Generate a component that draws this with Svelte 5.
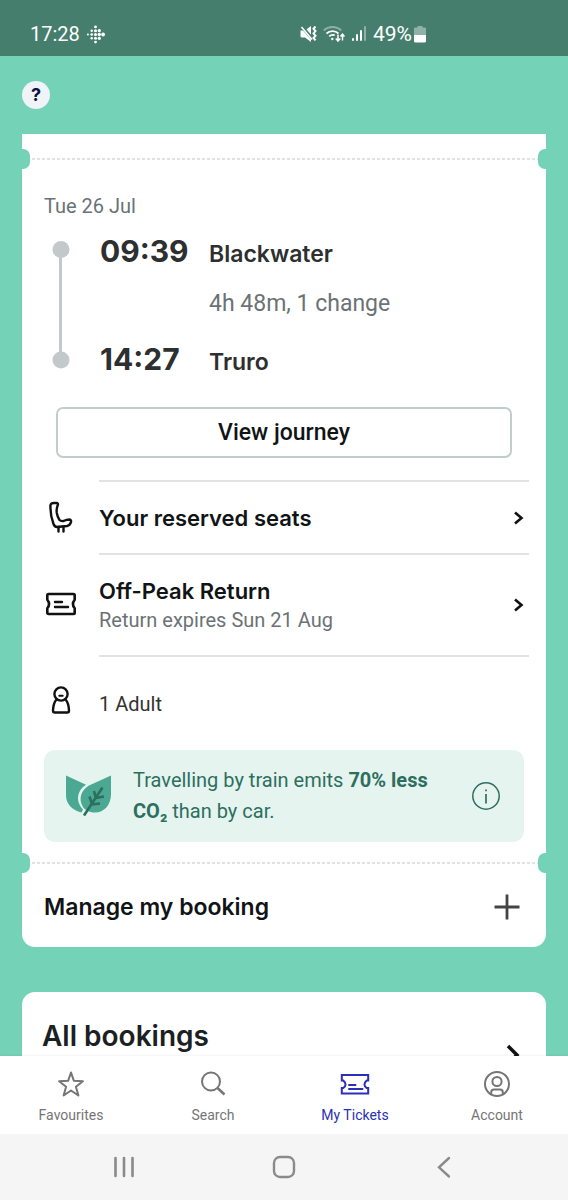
<script lang="ts">
  type Tab = { id: string; label: string };

  const legs = [
    { time: '09:39', station: 'Blackwater' },
    { time: '14:27', station: 'Truro' }
  ];

  const tabs: Tab[] = [
    { id: 'favourites', label: 'Favourites' },
    { id: 'search', label: 'Search' },
    { id: 'tickets', label: 'My Tickets' },
    { id: 'account', label: 'Account' }
  ];

  // dot pattern of the tracker icon: [x, y, radius]
  const trackerDots = [
    [10, 2, 1.5],
    [6, 6, 1.3], [10, 6, 1.6], [14, 6, 1.7],
    [2, 10, 1.1], [6, 10, 1.4], [10, 10, 1.6], [14, 10, 1.8], [18, 10, 2],
    [6, 14, 1.3], [10, 14, 1.6], [14, 14, 1.7],
    [10, 18, 1.5]
  ];

  let activeTab = 'tickets';
</script>

<div class="screen">
  <header class="status-bar">
    <div class="status-left">
      <span>17:28</span>
      <svg width="19" height="19" viewBox="0 0 20 20" fill="#fff" aria-hidden="true">
        {#each trackerDots as [x, y, r]}
          <circle cx={x} cy={y} {r} />
        {/each}
      </svg>
    </div>
    <div class="status-right">
      <svg width="17" height="18" viewBox="0 0 17 18" aria-hidden="true">
        <path d="M.5 5.500H5L11 1v16l-6-4.500H2a1.500 1.500 0 0 1-1.500-1.500z" fill="#fff" />
        <path d="M1 .5l12 14" stroke="#457e6d" stroke-width="3.400" />
        <path d="M1.500 2l10.500 12.500" stroke="#fff" stroke-width="1.600" />
        <path d="M15.500 1.500l-2 2.300 2 2.300-2 2.300 2 2.300-2 2.300 2 2.300" fill="none" stroke="#fff" stroke-width="2" />
      </svg>
      <svg width="22" height="18" viewBox="0 0 22 18" fill="none" stroke="#fff" stroke-width="1.800" aria-hidden="true">
        <path d="M.8 5.500a12.500 12.500 0 0 1 17.400 0" opacity=".4" />
        <path d="M3.500 8.500a8.800 8.800 0 0 1 12 0M6.300 11.300a5 5 0 0 1 5.500-1" />
        <circle cx="9.300" cy="14" r="1.200" fill="#fff" stroke="none" />
        <path d="M15 9.500v6M12.800 13.500L15 16l2.200-2.500M19.500 15.500v-6M17.500 11.500l2-2.300 2 2.300" stroke-width="1.500" />
      </svg>
      <svg width="16" height="18" viewBox="0 0 16 18" fill="#fff" aria-hidden="true">
        <rect x="1" y="13" width="2" height="3" rx="1" />
        <rect x="5" y="9" width="2" height="7" rx="1" />
        <rect x="9" y="5" width="2" height="11" rx="1" />
        <rect x="13" y="1" width="2" height="15" rx="1" opacity=".4" />
      </svg>
      <span class="battery">49%
        <svg width="12" height="18" viewBox="0 0 12 18" aria-hidden="true">
          <path d="M3.500 1h5v1.500H11a1 1 0 0 1 1 1V10H0V3.500a1 1 0 0 1 1-1h2.500z" fill="#fff" opacity=".4" />
          <path d="M0 10h12v6a1.500 1.500 0 0 1-1.500 1.500h-9A1.500 1.500 0 0 1 0 16z" fill="#fff" />
        </svg>
      </span>
    </div>
  </header>

  <main class="content">
    <button class="help" type="button" aria-label="Help">?</button>

    <article class="ticket">
      <div class="perforation"></div>

      <p class="date">Tue 26 Jul</p>

      <div class="trip">
        <svg width="34" height="138" viewBox="0 0 34 138" fill="#c3c9ca" aria-hidden="true">
          <rect x="15" y="18" width="3" height="111" />
          <circle cx="17" cy="18.500" r="8.500" />
          <circle cx="17" cy="129" r="8.500" />
        </svg>
        <div class="stops">
          <div class="stop">
            <time>{legs[0].time}</time>
            <span class="station">{legs[0].station}</span>
          </div>
          <div class="stop via">
            <span class="duration">4h 48m, 1 change</span>
          </div>
          <div class="stop">
            <time>{legs[1].time}</time>
            <span class="station">{legs[1].station}</span>
          </div>
        </div>
      </div>

      <button class="view-journey" type="button">View journey</button>

      <a class="row" href="#seats">
        <svg width="34" height="34" viewBox="0 0 34 34" fill="none" stroke="#111" stroke-width="2.400" stroke-linejoin="round" stroke-linecap="round" aria-hidden="true">
          <path d="M6.500 5Q7 3 10 3h2.500q2 .2 1.300 2-1.600 4-1 8 .7 4 2.700 7 1.500 1.500 4 1 3-1.500 6-1.500 2 .3 1.500 2.500-.8 3.200-4 4L13 27q-2.500-.2-3.500-3Q6 15 6.500 5z" />
          <path d="M14.500 27v4.500M19.500 27v4.500" />
        </svg>
        <span class="row-body seats">
          <strong>Your reserved seats</strong>
          <svg width="11" height="14" viewBox="0 0 11 14" aria-hidden="true">
            <path d="M2 1.500L8.500 7 2 12.500" fill="none" stroke="#111" stroke-width="2.600" />
          </svg>
        </span>
      </a>

      <a class="row" href="#ticket">
        <svg width="34" height="34" viewBox="0 0 34 34" fill="none" stroke="#111" stroke-width="2.600" stroke-linejoin="round" stroke-linecap="round" aria-hidden="true">
          <path d="M4.500 7h25q1.200 0 1.200 1.200v4.500q-3.500 4.300 0 8.600v4.500q0 1.200-1.200 1.200h-25q-1.200 0-1.200-1.200v-4.500q3.500-4.300 0-8.600V8.200Q3.300 7 4.500 7z" />
          <path d="M11 15h7M11 20h13" stroke-width="2.400" />
        </svg>
        <span class="row-body fare">
          <span class="fare-text">
            <strong>Off-Peak Return</strong>
            <small>Return expires Sun 21 Aug</small>
          </span>
          <svg width="11" height="14" viewBox="0 0 11 14" aria-hidden="true">
            <path d="M2 1.500L8.500 7 2 12.500" fill="none" stroke="#111" stroke-width="2.600" />
          </svg>
        </span>
      </a>

      <div class="row">
        <svg width="34" height="34" viewBox="0 0 34 34" fill="none" stroke="#111" stroke-width="2.400" stroke-linejoin="round" stroke-linecap="round" aria-hidden="true">
          <circle cx="17" cy="8" r="6.600" />
          <path d="M12.500 13.500Q9.300 17 9 24.500q0 2 1.800 2h12.400q1.800 0 1.800-2Q24.700 17 21.500 13.500" />
          <path d="M15.300 9.800h3.400" stroke-width="2" />
        </svg>
        <span class="row-body passengers">1 Adult</span>
      </div>

      <aside class="eco">
        <svg width="46" height="44" viewBox="0 0 46 44" aria-hidden="true">
          <path d="M0 1.500l20 9.200C13 15 10 23 13.500 30.500q1 2.500 3.500 5l-1.500 3C6 36 0 30 0 21z" fill="#4ba892" />
          <path d="M45 1.500V20c0 11-7 18.500-16 18.500-5 0-9-1.500-12-5.500C12 25 15 16 23 11.500z" fill="#4ba892" />
          <path d="M18 41.500L36.500 13.500M23.500 22.500l2.500 7.500M28 17l2 7.500M38 22.500l-8 1.500M34 29.500l-8.500 1" fill="none" stroke="#2d6f5f" stroke-width="2.600" />
        </svg>
        <p>Travelling by train emits <b>70% less</b> <b>CO₂</b> than by car.</p>
        <button class="info" type="button" aria-label="More information">
          <svg width="30" height="30" viewBox="0 0 30 30" aria-hidden="true">
            <circle cx="15" cy="15" r="13.200" fill="none" stroke="#2d6f5f" stroke-width="1.500" />
            <path d="M15 13v9.500M15 8.500v1.800" stroke="#2d6f5f" stroke-width="1.700" />
          </svg>
        </button>
      </aside>

      <div class="perforation"></div>

      <button class="manage" type="button">
        Manage my booking
        <svg width="26" height="26" viewBox="0 0 26 26" aria-hidden="true">
          <path d="M13 .5v25M.5 13h25" stroke="#444" stroke-width="2.800" />
        </svg>
      </button>
    </article>

    <a class="all-bookings" href="#bookings">
      <span>All bookings</span>
      <svg width="14" height="22" viewBox="0 0 14 22" aria-hidden="true">
        <path d="M2 2l9 9-9 9" fill="none" stroke="#111" stroke-width="3.500" />
      </svg>
    </a>
  </main>

  <nav class="tabs">
    {#each tabs as tab}
      <button class="tab" class:active={activeTab === tab.id} type="button" on:click={() => (activeTab = tab.id)}>
        <svg width="30" height="30" viewBox="0 0 30 30" fill="none" stroke="currentColor" stroke-width="2" aria-hidden="true">
          {#if tab.id === 'favourites'}
            <path d="M15 3.500l2.900 8.300 9 .4-7 5.500 2.500 8.800L15 21.500l-7.400 5 2.500-8.800-7-5.500 9-.4z" stroke-linejoin="round" />
          {:else if tab.id === 'search'}
            <circle cx="13" cy="12.500" r="9" />
            <path d="M19.500 19l7 6.500" stroke-width="2.400" />
          {:else if tab.id === 'tickets'}
            <path d="M1.800 6h26.400v5.500h-1.500q-4.500 4 0 7.500h1.500v5.500H1.800V19h1.500q4.500-3.500 0-7.500H1.800z" />
            <path d="M9 16h6.500M9 20h13.500" stroke-linecap="round" />
          {:else}
            <circle cx="15" cy="15" r="12" />
            <circle cx="15" cy="12.500" r="4.600" />
            <path d="M9.200 25.500v-2.300q0-2.700 2.800-2.700h6q2.800 0 2.800 2.700v2.300" />
          {/if}
        </svg>
        <span>{tab.label}</span>
      </button>
    {/each}
  </nav>

  <footer class="system-bar">
    <button type="button" aria-label="Recent apps">
      <svg width="24" height="24" viewBox="0 0 24 24" aria-hidden="true">
        <path d="M3.500 3v18M12 3v18M20.500 3v18" stroke="#8a8a8a" stroke-width="2.600" stroke-linecap="round" />
      </svg>
    </button>
    <button type="button" aria-label="Home">
      <svg width="24" height="24" viewBox="0 0 24 24" aria-hidden="true">
        <rect x="2" y="2" width="20" height="20" rx="6" fill="none" stroke="#8a8a8a" stroke-width="2.400" />
      </svg>
    </button>
    <button type="button" aria-label="Back">
      <svg width="24" height="24" viewBox="0 0 24 24" aria-hidden="true">
        <path d="M17 3L7 12.300 17 21.500" fill="none" stroke="#8a8a8a" stroke-width="2.400" stroke-linecap="round" />
      </svg>
    </button>
  </footer>
</div>

<style>
  :global(body) {
    margin: 0;
    background: #74d2b6;
  }

  .screen {
    display: flex;
    flex-direction: column;
    height: 100vh;
    font-family: Roboto, sans-serif;
    color: #111416;
  }

  button {
    border: 0;
    padding: 0;
    background: none;
    font: inherit;
    color: inherit;
    cursor: pointer;
  }

  a {
    color: inherit;
    text-decoration: none;
  }

  svg {
    display: block;
    flex: none;
  }

  .status-bar {
    display: grid;
    grid-template-columns: 1fr 1fr;
    align-items: center;
    box-sizing: border-box;
    height: 56px;
    padding: 12px 30px 0;
    background: #457e6d;
    color: #fff;
    font-size: 20px;
  }

  .status-left,
  .status-right,
  .battery {
    display: flex;
    align-items: center;
  }

  .status-left {
    gap: 6px;
  }

  .status-right {
    gap: 6px;
    padding-left: 16px;
  }

  .battery {
    gap: 2px;
    font-size: 21px;
  }

  .content {
    flex: 1;
    min-height: 0;
    overflow: hidden;
    padding: 25px 22px 0;
    background: #74d2b6;
  }

  .help {
    display: block;
    width: 28px;
    height: 28px;
    border-radius: 50%;
    background: #f0f3f8;
    color: #0b1442;
    font: 700 18px/28px Inter, sans-serif;
  }

  .ticket {
    margin-top: 25px;
    padding-top: 15px;
    border-radius: 0 0 13px 13px;
    background: #fff;
  }

  .perforation {
    display: flex;
    align-items: center;
    justify-content: space-between;
    height: 20px;
    background: repeating-linear-gradient(90deg, #e2e2e2 0 3px, #fff 3px 5px) center / 100% 2px no-repeat;
  }

  .perforation::before,
  .perforation::after {
    content: '';
    width: 8px;
    height: 20px;
    background: #74d2b6;
    border-radius: 0 7px 7px 0;
  }

  .perforation::after {
    border-radius: 7px 0 0 7px;
  }

  .date {
    margin: 24px 22px 0;
    font-size: 20px;
    line-height: 26px;
    color: #6b7275;
  }

  .trip {
    display: flex;
    align-items: flex-start;
    gap: 22px;
    margin: 12px 22px 0;
  }

  .stops {
    flex: 1;
  }

  .stop {
    display: grid;
    grid-template-columns: 88px 1fr;
    column-gap: 21px;
    align-items: baseline;
    line-height: 40px;
    color: #2d2f30;
  }

  .via {
    padding: 10px 0 15px;
  }

  time {
    font: 700 30px/40px Inter, sans-serif;
  }

  .station {
    font-family: Inter, sans-serif;
    font-size: 23px;
    font-weight: 600;
  }

  .duration {
    grid-column: 2;
    font-size: 23px;
    color: #6b7275;
  }

  .view-journey {
    display: block;
    box-sizing: border-box;
    width: calc(100% - 68px);
    height: 51px;
    margin: 25px auto 22px;
    border: 2px solid #c3cccc;
    border-radius: 7px;
    font-size: 23px;
    font-weight: 500;
  }

  .row {
    display: flex;
    align-items: center;
    gap: 21px;
    padding: 0 17px 0 22px;
  }

  .row-body {
    display: flex;
    flex: 1;
    align-items: center;
    justify-content: space-between;
    box-sizing: border-box;
    border-top: 2px solid #e1e3e3;
    padding-right: 5px;
  }

  .row strong {
    font: 600 22px/30px Inter, sans-serif;
  }

  .seats {
    height: 73px;
  }

  .fare {
    height: 102px;
  }

  .fare-text {
    display: grid;
  }

  .fare small {
    font-size: 20px;
    line-height: 28px;
    color: #6b7275;
  }

  .passengers {
    height: 95px;
    font-size: 20px;
    color: #333;
  }

  .eco {
    display: flex;
    align-items: center;
    gap: 21px;
    margin: 0 22px 11px;
    padding: 15px 23px 15px 22px;
    border-radius: 11px;
    background: #e6f4ef;
    color: #2d6f5f;
  }

  .eco p {
    flex: 1;
    margin: 0;
    font-size: 20px;
    line-height: 31px;
  }

  .manage {
    display: flex;
    align-items: center;
    justify-content: space-between;
    width: 100%;
    height: 74px;
    padding: 0 26px 6px 22px;
    font: 600 23px/30px Inter, sans-serif;
  }

  .all-bookings {
    display: flex;
    align-items: flex-start;
    justify-content: space-between;
    margin-top: 45px;
    padding: 24px 26px 24px 20px;
    border-radius: 13px 13px 0 0;
    background: #fff;
    font: 600 28px/40px Inter, sans-serif;
    color: #1b2023;
  }

  .all-bookings svg {
    margin-top: 28px;
  }

  .tabs {
    display: grid;
    grid-template-columns: repeat(4, 1fr);
    height: 78px;
    background: #fff;
    color: #757575;
    box-shadow: 0 -1px 2px rgba(0, 0, 0, 0.05);
  }

  .tab {
    display: flex;
    flex-direction: column;
    align-items: center;
    gap: 6px;
    padding-top: 13px;
    font-size: 14px;
    line-height: 20px;
  }

  .tab.active {
    color: #2a30b8;
  }

  .system-bar {
    display: grid;
    grid-template-columns: repeat(3, 1fr);
    height: 66px;
    padding: 0 44px;
    background: #f5f5f5;
  }

  .system-bar button {
    display: grid;
    place-items: center;
  }
</style>
